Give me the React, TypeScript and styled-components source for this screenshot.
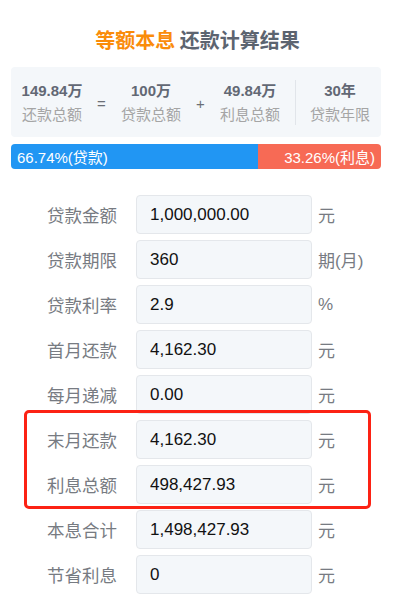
import styled, { createGlobalStyle } from "styled-components";

const GlobalStyle = createGlobalStyle`
  html, body {
    margin: 0;
    padding: 0;
    background: #ffffff;
  }
  body {
    font-family: "Liberation Sans", "Noto Sans CJK SC", sans-serif;
  }
  * {
    box-sizing: border-box;
  }
`;

// STYLED COMPONENTS
const Page = styled.div`
  width: 395px;
  height: 616px;
  overflow: hidden;
  background: #fff;
`;

const Title = styled.h1`
  margin: 26px 0 13px;
  height: 28px;
  line-height: 28px;
  text-align: center;
  font-family: "Noto Sans CJK SC", sans-serif;
  font-size: 20px;
  font-weight: 700;
  color: #5c6470;

  .accent {
    color: #fa8c0a;
  }
`;

const Summary = styled.div`
  margin: 0 14px 0 11px;
  height: 70px;
  padding: 0 11px;
  display: flex;
  align-items: center;
  justify-content: space-between;
  background: #f4f7fa;
  border-radius: 4px;
`;

const SummaryItem = styled.div`
  display: flex;
  flex-direction: column;
  align-items: center;
  width: 60px;

  .value {
    font-size: 15px;
    line-height: 23px;
    font-weight: 700;
    color: #626874;
    white-space: nowrap;
  }
  .label {
    font-family: "Noto Sans CJK SC", sans-serif;
    font-size: 15px;
    line-height: 23px;
    color: #a5a5a5;
    white-space: nowrap;
  }
`;

const Operator = styled.span`
  width: 10px;
  text-align: center;
  font-size: 15px;
  color: #6b6f76;
  margin-top: 2px;
`;

const Divider = styled.span`
  width: 1px;
  height: 45px;
  background: #e1e5ea;
`;

const Bar = styled.div`
  margin: 7px 14px 0 11px;
  height: 25px;
  display: flex;
  border-radius: 4px;
  overflow: hidden;
  font-size: 15px;
  color: #fff;
`;

const Segment = styled.div<{ $color: string; $align: "left" | "right" }>`
  height: 100%;
  display: flex;
  align-items: center;
  justify-content: ${(p) => (p.$align === "left" ? "flex-start" : "flex-end")};
  padding: 0 6px;
  background: ${(p) => p.$color};
  white-space: nowrap;
`;

const Form = styled.div`
  margin-top: 26px;
  display: flex;
  flex-direction: column;
  gap: 6px;
`;

const Highlight = styled.div`
  position: relative;
  display: flex;
  flex-direction: column;
  gap: 6px;

  &::after {
    content: "";
    position: absolute;
    top: -10px;
    bottom: -5px;
    left: 24px;
    right: 24px;
    border: 3px solid #fc2214;
    border-radius: 5px;
    pointer-events: none;
  }
`;

const Row = styled.div`
  display: flex;
  align-items: center;
  height: 39px;
  padding-left: 47px;
`;

const Label = styled.span`
  width: 72px;
  margin-right: 17px;
  font-family: "Noto Sans CJK SC", sans-serif;
  font-size: 17.5px;
  color: #777b82;
  white-space: nowrap;
`;

const Field = styled.input`
  width: 176px;
  height: 39px;
  padding: 0 13px;
  background: #f4f7fa;
  border: 1px solid #e4e7eb;
  border-radius: 4px;
  font-family: "Liberation Sans", sans-serif;
  font-size: 17px;
  color: #111;
  outline: none;
`;

const Unit = styled.span`
  margin-left: 6px;
  font-family: "Liberation Sans", "Noto Sans CJK SC", sans-serif;
  font-size: 17px;
  color: #777b82;
`;

// ===============================================
interface Item {
  label: string;
  value: string;
  unit: string;
}

const topRows: Item[] = [
  { label: "贷款金额", value: "1,000,000.00", unit: "元" },
  { label: "贷款期限", value: "360", unit: "期(月)" },
  { label: "贷款利率", value: "2.9", unit: "%" },
  { label: "首月还款", value: "4,162.30", unit: "元" },
  { label: "每月递减", value: "0.00", unit: "元" },
];

const highlightRows: Item[] = [
  { label: "末月还款", value: "4,162.30", unit: "元" },
  { label: "利息总额", value: "498,427.93", unit: "元" },
];

const bottomRows: Item[] = [
  { label: "本息合计", value: "1,498,427.93", unit: "元" },
  { label: "节省利息", value: "0", unit: "元" },
];
// ===============================================

function FormRow({ label, value, unit }: Item) {
  return (
    <Row>
      <Label>{label}</Label>
      <Field readOnly value={value} />
      <Unit>{unit}</Unit>
    </Row>
  );
}

export default function App() {
  const loanShare = 66.74;

  return (
    <Page>
      <GlobalStyle />
      <Title>
        <span className="accent">等额本息</span> 还款计算结果
      </Title>

      <Summary>
        <SummaryItem>
          <span className="value">149.84万</span>
          <span className="label">还款总额</span>
        </SummaryItem>
        <Operator>=</Operator>
        <SummaryItem>
          <span className="value">100万</span>
          <span className="label">贷款总额</span>
        </SummaryItem>
        <Operator>+</Operator>
        <SummaryItem>
          <span className="value">49.84万</span>
          <span className="label">利息总额</span>
        </SummaryItem>
        <Divider />
        <SummaryItem>
          <span className="value">30年</span>
          <span className="label">贷款年限</span>
        </SummaryItem>
      </Summary>

      <Bar>
        <Segment $color="#2196f3" $align="left" style={{ width: `${loanShare}%` }}>
          66.74%(贷款)
        </Segment>
        <Segment $color="#f76a55" $align="right" style={{ flex: 1 }}>
          33.26%(利息)
        </Segment>
      </Bar>

      <Form>
        {topRows.map((r) => (
          <FormRow key={r.label} {...r} />
        ))}
        <Highlight>
          {highlightRows.map((r) => (
            <FormRow key={r.label} {...r} />
          ))}
        </Highlight>
        {bottomRows.map((r) => (
          <FormRow key={r.label} {...r} />
        ))}
      </Form>
    </Page>
  );
}
